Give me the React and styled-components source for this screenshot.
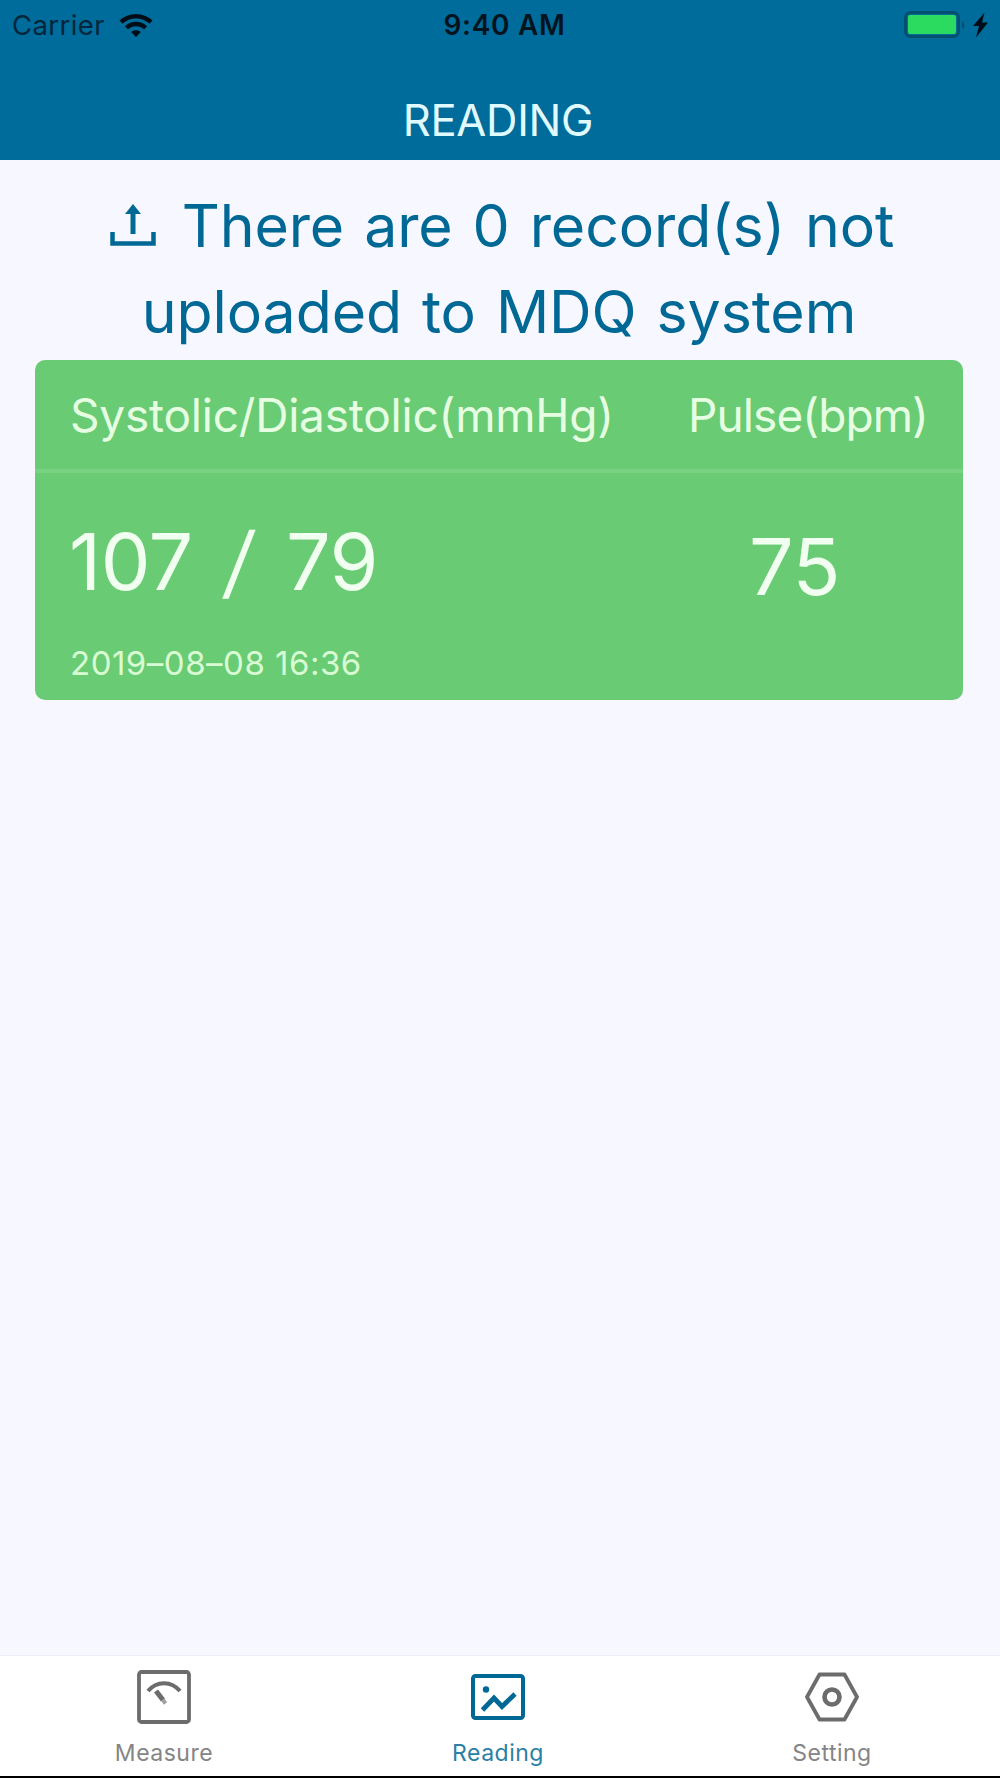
import React from 'react'
import styled, { createGlobalStyle } from 'styled-components'

const GlobalStyle = createGlobalStyle`
    * {
        box-sizing: border-box;
    }
    body {
        margin: 0;
        background: #f6f7ff;
        font-family: Inter, "Liberation Sans", sans-serif;
    }
`
const Screen = styled.div`
    width: 1000px;
    height: 1778px;
    display: flex;
    flex-direction: column;
    overflow: hidden;
    background: #f6f7ff;
`
const Header = styled.header`
    height: 160px;
    flex: none;
    background: #006c9b;
`
const StatusBar = styled.div`
    height: 50px;
    display: grid;
    grid-template-columns: 1fr auto 1fr;
    align-items: center;
    padding: 0 10px 0 12px;
    color: #04141f;
`
const Carrier = styled.div`
    display: flex;
    align-items: center;
    gap: 14px;
    font-size: 27.5px;
    letter-spacing: 0.4px;
    color: #04263a;
`
const Clock = styled.div`
    font-size: 28px;
    font-weight: 600;
    letter-spacing: 0.7px;
    padding-left: 7px;
`
const Power = styled.div`
    display: flex;
    justify-content: flex-end;
    align-items: center;
`
const Title = styled.h1`
    margin: 0;
    height: 110px;
    padding-top: 44px;
    padding-right: 4px;
    line-height: 52px;
    text-align: center;
    font-size: 43.5px;
    font-weight: 400;
    letter-spacing: -0.3px;
    color: #e0fbff;
`
const Content = styled.main`
    flex: 1;
    padding: 23px 37px 0 35px;
`
const Notice = styled.div`
    display: flex;
    flex-direction: column;
    align-items: center;
    height: 177px;
    font-size: 59px;
    font-weight: 400;
    line-height: 86px;
    letter-spacing: -0.1px;
    word-spacing: 3.5px;
    white-space: nowrap;
    color: #006895;
`
const NoticeLine = styled.div`
    display: flex;
    align-items: center;
    gap: 26px;
    padding-left: ${(props) => props.$indent || 0}px;
`
const Card = styled.section`
    height: 340px;
    border-radius: 10px;
    background: #69cb74;
    color: #f1fff0;
`
const CardHead = styled.div`
    height: 113px;
    display: flex;
    justify-content: space-between;
    padding: 27px 35px 0 35px;
    border-bottom: 4px solid #79d182;
    font-size: 46px;
    font-weight: 400;
    line-height: 56px;
    white-space: nowrap;
    color: #e6ffe2;
`
const HeadLabel = styled.span`
    letter-spacing: ${(props) => props.$spacing}px;
`
const CardBody = styled.div`
    display: flex;
    justify-content: space-between;
    padding: 41px 123px 0 34px;
`
const Value = styled.div`
    font-size: 79px;
    font-weight: 400;
    line-height: 94px;
    letter-spacing: -0.5px;
    white-space: pre;
    padding-top: ${(props) => props.$drop || 0}px;
`
const Slash = styled.span`
    display: inline-block;
    margin: 0 11px;
    transform: skewX(-7deg);
`
const Date = styled.div`
    margin-top: 35px;
    padding-left: 1px;
    font-size: 33px;
    font-weight: 400;
    line-height: 40px;
    letter-spacing: 0.5px;
    color: #d8fcd3;
`
const TabBar = styled.nav`
    height: 123px;
    flex: none;
    display: grid;
    grid-template-columns: repeat(3, 334px);
    justify-content: center;
    background: #fff;
    border-top: 1px solid #eeeef6;
    border-bottom: 2px solid #000;
`
const Tab = styled.div`
    display: flex;
    flex-direction: column;
    align-items: center;
    padding-top: 14px;
    padding-right: 4px;
    font-size: 23px;
    line-height: 28px;
    font-weight: 400;
    letter-spacing: 0.5px;
    color: ${(props) => (props.$active ? '#2a80a5' : '#858585')};

    svg {
        display: block;
        margin-bottom: 15px;
    }
`

const WifiIcon = () => (
    <svg width="34" height="25" viewBox="0 0 34 25" fill="none" stroke="#000d16" strokeWidth="4.4">
        <path d="M2 9.2C10.5 1.2 23.5 1.2 32 9.2" />
        <path d="M7.5 14.8C13 9.7 21 9.7 26.5 14.8" />
        <path d="M17 24l-4.8-4.9c2.7-2.6 6.9-2.6 9.6 0z" fill="#000d16" stroke="none" />
    </svg>
)

const BatteryIcon = () => (
    <svg width="86" height="28" viewBox="0 0 86 28">
        <rect x="1.5" y="1.5" width="53" height="24" rx="5" fill="none" stroke="#045071" strokeWidth="3" />
        <rect x="4" y="4" width="48" height="19" rx="2" fill="#2bdb60" />
        <path d="M58 10c3 .8 3 7.2 0 8z" fill="#045071" />
        <path d="M80.5 1.5L69 15h6l-3 11.5 12-15h-6z" fill="#000d16" />
    </svg>
)

const UploadIcon = () => (
    <svg width="46" height="46" viewBox="0 0 46 46">
        <path d="M2.5 29v11.5h41V29" fill="none" stroke="#006895" strokeWidth="4.5" />
        <path d="M23 31V8" stroke="#006895" strokeWidth="5" />
        <path d="M23 1l8 10H15z" fill="#006895" />
    </svg>
)

const MeasureIcon = () => (
    <svg width="54" height="54" viewBox="0 0 54 54" fill="none" stroke="#6c6c6c" strokeWidth="3.8">
        <rect x="2" y="2" width="50" height="50" rx="2.5" />
        <path d="M11 21C19.5 10.5 34.5 10.5 43 21" strokeWidth="4" />
        <path d="M19 21l7 9" strokeWidth="5" />
        <path d="M26 30l2.5 3.5" strokeWidth="4" stroke="#a0a0a0" />
    </svg>
)

const ReadingIcon = () => (
    <svg width="54" height="54" viewBox="0 0 54 54" fill="none" stroke="#006895" strokeWidth="4">
        <rect x="2" y="6" width="50" height="42" rx="2.5" />
        <circle cx="15" cy="19.5" r="3.2" fill="#006895" stroke="none" />
        <path d="M11.5 40l11.5-12 8 8.5L44 24" strokeWidth="4.8" />
    </svg>
)

const SettingIcon = () => (
    <svg width="54" height="54" viewBox="0 0 54 54" fill="none" stroke="#6c6c6c" strokeWidth="3.8" strokeLinejoin="round">
        <path d="M14.5 4.5h25L52 27 39.5 49.5h-25L2 27z" />
        <circle cx="27" cy="27" r="7.5" strokeWidth="4.6" />
    </svg>
)

const tabs = [
    { label: 'Measure', Icon: MeasureIcon },
    { label: 'Reading', Icon: ReadingIcon, active: true },
    { label: 'Setting', Icon: SettingIcon },
]

const App = () => {
  return (
    <Screen>
        <GlobalStyle />
        <Header>
            <StatusBar>
                <Carrier>Carrier <WifiIcon /></Carrier>
                <Clock>9:40 AM</Clock>
                <Power><BatteryIcon /></Power>
            </StatusBar>
            <Title>READING</Title>
        </Header>
        <Content>
            <Notice>
                <NoticeLine $indent={6}>
                    <UploadIcon />
                    <span>There are 0 record(s) not</span>
                </NoticeLine>
                <NoticeLine>uploaded to MDQ system</NoticeLine>
            </Notice>
            <Card>
                <CardHead>
                    <HeadLabel $spacing={-0.2}>Systolic/Diastolic(mmHg)</HeadLabel>
                    <HeadLabel $spacing={-0.9}>Pulse(bpm)</HeadLabel>
                </CardHead>
                <CardBody>
                    <div>
                        <Value>107 <Slash>/</Slash> 79</Value>
                        <Date>2019–08–08 16:36</Date>
                    </div>
                    <Value $drop={5}>75</Value>
                </CardBody>
            </Card>
        </Content>
        <TabBar>
            {tabs.map(({ label, Icon, active }) => (
                <Tab key={label} $active={active}>
                    <Icon />
                    {label}
                </Tab>
            ))}
        </TabBar>
    </Screen>
  )
}

export default App
